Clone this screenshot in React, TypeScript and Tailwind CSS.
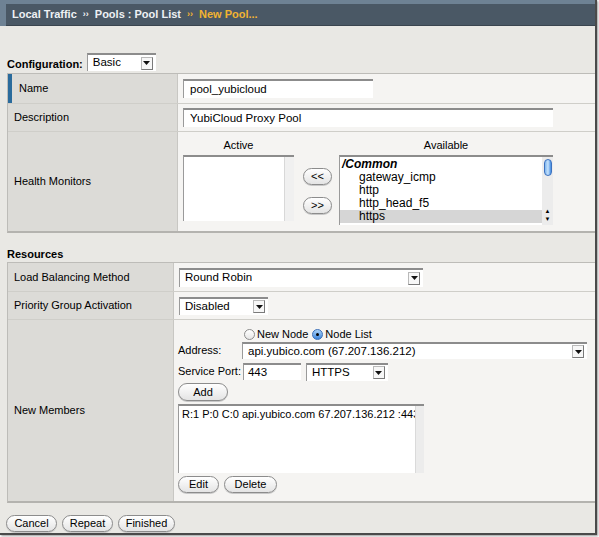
import React from "react";

const font = { fontFamily: '"Liberation Sans", Arial, sans-serif' };

function Caret() {
	return (
		<span className="ml-auto flex h-[13px] w-[12px] shrink-0 items-center justify-center border border-[#b9b9b9] border-b-[#7a7a7a] border-r-[#7a7a7a] bg-[#f7f7f7]">
			<svg width="7" height="4" viewBox="0 0 7 4">
				<path d="M0 0H7L3.5 4Z" fill="#111" />
			</svg>
		</span>
	);
}

function Select({ value, className }: { value: string; className: string }) {
	return (
		<div
			className={`flex items-center border-l border-t-2 border-l-[#9a9a9a] border-t-[#8c8c8c] bg-white pl-[5px] pr-[3px] text-[11.5px] text-black ${className}`}
		>
			<span className="truncate">{value}</span>
			<Caret />
		</div>
	);
}

function TextInput({ value, className }: { value: string; className: string }) {
	return (
		<div
			className={`flex items-center border-l border-t-2 border-l-[#9a9a9a] border-t-[#8c8c8c] bg-white text-[11.5px] text-black ${className}`}
		>
			{value}
		</div>
	);
}

function Pill({ label, className = "" }: { label: string; className?: string }) {
	return (
		<button
			type="button"
			className={`flex h-[17px] items-center justify-center rounded-full border border-[#8c8c8c] bg-gradient-to-b from-white to-[#e4e4e4] text-[11px] leading-none text-black shadow-[0_1px_0_#c8c8c8] ${className}`}
		>
			{label}
		</button>
	);
}

function Radio({ checked }: { checked?: boolean }) {
	return checked ? (
		<span className="flex h-[11px] w-[11px] items-center justify-center rounded-full border border-[#3a6fb8] bg-gradient-to-b from-[#a9d2f7] to-[#3d86dc]">
			<span className="h-[3px] w-[3px] rounded-full bg-black" />
		</span>
	) : (
		<span className="h-[11px] w-[11px] rounded-full border border-[#8c8c8c] bg-gradient-to-b from-white to-[#e6e6e6]" />
	);
}

export default function App() {
	return (
		<div className="h-[537px] w-[599px] overflow-hidden bg-white" style={font}>
			<div className="flex h-[535px] w-[597px] flex-col border-b-2 border-r-2 border-[#4a4a4a] bg-[#e9e8e4] shadow-[1px_1px_2px_#999]">
				{/* breadcrumb bar */}
				<div className="h-[26px] shrink-0 bg-[#6e8294] pl-[6px] pt-[4px]">
					<div className="flex h-[22px] items-center border-b border-[#3a454f] bg-[#4a5865] pl-[6px] text-[11px] font-bold text-[#eef1f4]">
						<span>Local Traffic</span>
						<span className="mx-[6px] text-[9px]">››</span>
						<span>Pools : Pool List</span>
						<span className="mx-[6px] text-[9px] text-[#f2b331]">››</span>
						<span className="text-[#f2b331]">New Pool...</span>
					</div>
				</div>

				{/* configuration */}
				<div className="mt-[27px] flex h-[18px] items-end pl-[7px]">
					<span className="mb-[-1px] text-[11px] font-bold text-black">Configuration:</span>
					<Select value="Basic" className="ml-[4px] h-[18px] w-[69px]" />
				</div>

				<div className="ml-[7px] mt-[2px] border-b-2 border-l border-t border-[#bdbcb8] border-b-[#b4b3af] text-[11px] text-black">
					<div className="grid h-[30px] grid-cols-[170px_1fr] border-b border-[#cfcec9]">
						<div className="flex items-center border-r border-[#c8c7c3] bg-[#dcdbd7]">
							<span className="h-full w-[4px] bg-[#2a6b9c]" />
							<span className="pl-[7px]">Name</span>
						</div>
						<div className="flex items-center bg-[#f5f4f2] pl-[5px]">
							<TextInput value="pool_yubicloud" className="h-[19px] w-[190px] pl-[6px]" />
						</div>
					</div>
					<div className="grid h-[28px] grid-cols-[170px_1fr] border-b border-[#cfcec9]">
						<div className="flex items-center border-r border-[#c8c7c3] bg-[#dcdbd7] pl-[6px]">
							Description
						</div>
						<div className="flex items-center bg-[#f5f4f2] pl-[5px]">
							<TextInput value="YubiCloud Proxy Pool" className="h-[19px] w-[370px] pl-[6px]" />
						</div>
					</div>
					<div className="grid h-[99px] grid-cols-[170px_1fr]">
						<div className="flex items-center border-r border-[#c8c7c3] bg-[#dcdbd7] pl-[6px]">
							Health Monitors
						</div>
						<div className="flex items-start bg-[#f5f4f2] pl-[5px] pt-[6px]">
							<div className="flex w-[111px] flex-col items-center">
								<span className="leading-[14px]">Active</span>
								<div className="mt-[3px] flex h-[66px] w-[111px] border-l border-t-2 border-l-[#9a9a9a] border-t-[#8c8c8c] bg-white">
									<div className="ml-auto h-full w-[10px] border-l border-[#d8d8d8] bg-[#f0f0f0]" />
								</div>
							</div>
							<div className="ml-[9px] mt-[30px] flex flex-col gap-[12px]">
								<Pill label="<<" className="w-[29px] text-[10px]" />
								<Pill label=">>" className="w-[29px] text-[10px]" />
							</div>
							<div className="ml-[7px] flex w-[214px] flex-col items-center">
								<span className="leading-[14px]">Available</span>
								<div className="mt-[3px] flex h-[70px] w-[214px] border-l border-t-2 border-l-[#9a9a9a] border-t-[#8c8c8c] bg-white">
									<div className="flex flex-1 flex-col pt-[1px] text-[12px] leading-[13px]">
										<span className="pl-[2px] font-bold italic">/Common</span>
										<span className="pl-[19px]">gateway_icmp</span>
										<span className="pl-[19px]">http</span>
										<span className="pl-[19px]">http_head_f5</span>
										<span className="bg-[#d6d6d6] pl-[19px]">https</span>
									</div>
									<div className="flex w-[11px] flex-col items-center bg-[#ececec] py-[2px]">
										<span className="h-[17px] w-[8px] rounded-full border border-[#3d72c0] bg-gradient-to-r from-[#7fb6ee] via-[#c6e2fb] to-[#3f8ae0]" />
										<span className="mt-auto text-[6px] leading-[8px]">▲</span>
										<span className="text-[6px] leading-[8px]">▼</span>
									</div>
								</div>
							</div>
						</div>
					</div>
				</div>

				{/* resources */}
				<div className="mt-[14px] pl-[7px] text-[11px] font-bold leading-[14px] text-black">Resources</div>
				<div className="ml-[7px] mt-[1px] border-b-2 border-l border-t border-[#bdbcb8] border-b-[#b4b3af] text-[11px] text-black">
					<div className="grid h-[29px] grid-cols-[166px_1fr] border-b border-[#cfcec9]">
						<div className="flex items-center border-r border-[#c8c7c3] bg-[#dcdbd7] pl-[6px]">
							Load Balancing Method
						</div>
						<div className="flex items-center bg-[#f5f4f2] pl-[5px]">
							<Select value="Round Robin" className="h-[19px] w-[244px]" />
						</div>
					</div>
					<div className="grid h-[28px] grid-cols-[166px_1fr] border-b border-[#cfcec9]">
						<div className="flex items-center border-r border-[#c8c7c3] bg-[#dcdbd7] pl-[6px]">
							Priority Group Activation
						</div>
						<div className="flex items-center bg-[#f5f4f2] pl-[5px]">
							<Select value="Disabled" className="h-[18px] w-[89px]" />
						</div>
					</div>
					<div className="grid h-[181px] grid-cols-[166px_1fr]">
						<div className="flex items-center border-r border-[#c8c7c3] bg-[#dcdbd7] pl-[6px]">
							New Members
						</div>
						<div className="flex flex-col bg-[#f5f4f2] pl-[4px] pt-[7px]">
							<div className="ml-[66px] flex h-[14px] items-center">
								<Radio />
								<span className="ml-[2px]">New Node</span>
								<span className="ml-[4px]">
									<Radio checked />
								</span>
								<span className="ml-[2px]">Node List</span>
							</div>
							<div className="mt-[1px] flex h-[17px] items-center">
								<span className="w-[64px] whitespace-nowrap">Address:</span>
								<Select value="api.yubico.com (67.207.136.212)" className="h-[17px] w-[345px]" />
							</div>
							<div className="mt-[4px] flex h-[17px] items-center">
								<span className="mr-[2px] whitespace-nowrap">Service Port:</span>
								<TextInput value="443" className="h-[17px] w-[58px] pl-[4px]" />
								<Select value="HTTPS" className="ml-[5px] h-[18px] w-[82px]" />
							</div>
							<Pill label="Add" className="mt-[3px] h-[18px] w-[50px]" />
							<div className="mt-[3px] flex h-[69px] w-[246px] border-l border-t-2 border-l-[#9a9a9a] border-t-[#8c8c8c] bg-white">
								<div className="flex-1 overflow-hidden whitespace-nowrap pl-[3px] pt-[1px] text-[11px] leading-[14px]">
									R:1 P:0 C:0 api.yubico.com 67.207.136.212 :443
								</div>
								<div className="h-full w-[9px] shrink-0 border-l border-[#dadada] bg-[#ececec]" />
							</div>
							<div className="mt-[3px] flex gap-[5px]">
								<Pill label="Edit" className="w-[41px]" />
								<Pill label="Delete" className="w-[53px]" />
							</div>
						</div>
					</div>
				</div>

				{/* actions */}
				<div className="mt-[12px] flex gap-[5px] pl-[6px]">
					<Pill label="Cancel" className="w-[51px]" />
					<Pill label="Repeat" className="w-[51px]" />
					<Pill label="Finished" className="w-[57px]" />
				</div>
			</div>
		</div>
	);
}
